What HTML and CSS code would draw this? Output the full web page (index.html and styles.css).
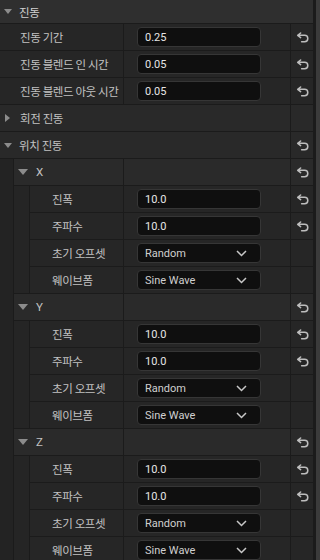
FILE: index.html
```html
<!doctype html>
<html>
<head>
<meta charset="utf-8">
<title>진동</title>
<link rel="stylesheet" href="styles.css">
</head>
<body>

<div class="panel">
<div class="list">

	<div class="header"><span class="tri down"></span>진동</div>

	<div class="row">
		<div class="name pad">진동 기간</div>
		<div class="value"><div class="field">0.25</div></div>
		<div class="reset"><svg width="13" height="11" viewBox="0 0 13 11"><path d="M4.6 1 L1.7 3.3 L4.6 5.6 M2 3.3 H8.6 A3.2 3.2 0 0 1 8.6 9.7 H5.6"/></svg></div>
	</div>
	<div class="row">
		<div class="name pad">진동 블렌드 인 시간</div>
		<div class="value"><div class="field">0.05</div></div>
		<div class="reset"><svg width="13" height="11" viewBox="0 0 13 11"><path d="M4.6 1 L1.7 3.3 L4.6 5.6 M2 3.3 H8.6 A3.2 3.2 0 0 1 8.6 9.7 H5.6"/></svg></div>
	</div>
	<div class="row">
		<div class="name pad">진동 블렌드 아웃 시간</div>
		<div class="value"><div class="field">0.05</div></div>
		<div class="reset"><svg width="13" height="11" viewBox="0 0 13 11"><path d="M4.6 1 L1.7 3.3 L4.6 5.6 M2 3.3 H8.6 A3.2 3.2 0 0 1 8.6 9.7 H5.6"/></svg></div>
	</div>

	<div class="row group">
		<div class="name"><span class="tri right"></span>회전 진동</div>
		<div class="reset"></div>
	</div>
	<div class="row group">
		<div class="name"><span class="tri down"></span>위치 진동</div>
		<div class="reset"><svg width="13" height="11" viewBox="0 0 13 11"><path d="M4.6 1 L1.7 3.3 L4.6 5.6 M2 3.3 H8.6 A3.2 3.2 0 0 1 8.6 9.7 H5.6"/></svg></div>
	</div>

	<div class="nest">
		<div class="gutter"></div>
		<div class="list">

			<!-- X -->
			<div class="row struct">
				<div class="name"><span class="tri down"></span>X</div>
				<div class="value"></div>
				<div class="reset"><svg width="13" height="11" viewBox="0 0 13 11"><path d="M4.6 1 L1.7 3.3 L4.6 5.6 M2 3.3 H8.6 A3.2 3.2 0 0 1 8.6 9.7 H5.6"/></svg></div>
			</div>
			<div class="nest">
				<div class="gutter wide"></div>
				<div class="list">
					<div class="row">
						<div class="name pad">진폭</div>
						<div class="value"><div class="field">10.0</div></div>
						<div class="reset"><svg width="13" height="11" viewBox="0 0 13 11"><path d="M4.6 1 L1.7 3.3 L4.6 5.6 M2 3.3 H8.6 A3.2 3.2 0 0 1 8.6 9.7 H5.6"/></svg></div>
					</div>
					<div class="row">
						<div class="name pad">주파수</div>
						<div class="value"><div class="field">10.0</div></div>
						<div class="reset"><svg width="13" height="11" viewBox="0 0 13 11"><path d="M4.6 1 L1.7 3.3 L4.6 5.6 M2 3.3 H8.6 A3.2 3.2 0 0 1 8.6 9.7 H5.6"/></svg></div>
					</div>
					<div class="row">
						<div class="name pad">초기 오프셋</div>
						<div class="value"><div class="field select">Random<svg width="11" height="7" viewBox="0 0 11 7"><path d="M1 1 L5.5 5.5 L10 1"/></svg></div></div>
						<div class="reset"></div>
					</div>
					<div class="row">
						<div class="name pad">웨이브폼</div>
						<div class="value"><div class="field select">Sine Wave<svg width="11" height="7" viewBox="0 0 11 7"><path d="M1 1 L5.5 5.5 L10 1"/></svg></div></div>
						<div class="reset"></div>
					</div>
				</div>
			</div>

			<!-- Y -->
			<div class="row struct">
				<div class="name"><span class="tri down"></span>Y</div>
				<div class="value"></div>
				<div class="reset"><svg width="13" height="11" viewBox="0 0 13 11"><path d="M4.6 1 L1.7 3.3 L4.6 5.6 M2 3.3 H8.6 A3.2 3.2 0 0 1 8.6 9.7 H5.6"/></svg></div>
			</div>
			<div class="nest">
				<div class="gutter wide"></div>
				<div class="list">
					<div class="row">
						<div class="name pad">진폭</div>
						<div class="value"><div class="field">10.0</div></div>
						<div class="reset"><svg width="13" height="11" viewBox="0 0 13 11"><path d="M4.6 1 L1.7 3.3 L4.6 5.6 M2 3.3 H8.6 A3.2 3.2 0 0 1 8.6 9.7 H5.6"/></svg></div>
					</div>
					<div class="row">
						<div class="name pad">주파수</div>
						<div class="value"><div class="field">10.0</div></div>
						<div class="reset"><svg width="13" height="11" viewBox="0 0 13 11"><path d="M4.6 1 L1.7 3.3 L4.6 5.6 M2 3.3 H8.6 A3.2 3.2 0 0 1 8.6 9.7 H5.6"/></svg></div>
					</div>
					<div class="row">
						<div class="name pad">초기 오프셋</div>
						<div class="value"><div class="field select">Random<svg width="11" height="7" viewBox="0 0 11 7"><path d="M1 1 L5.5 5.5 L10 1"/></svg></div></div>
						<div class="reset"></div>
					</div>
					<div class="row">
						<div class="name pad">웨이브폼</div>
						<div class="value"><div class="field select">Sine Wave<svg width="11" height="7" viewBox="0 0 11 7"><path d="M1 1 L5.5 5.5 L10 1"/></svg></div></div>
						<div class="reset"></div>
					</div>
				</div>
			</div>

			<!-- Z -->
			<div class="row struct">
				<div class="name"><span class="tri down"></span>Z</div>
				<div class="value"></div>
				<div class="reset"><svg width="13" height="11" viewBox="0 0 13 11"><path d="M4.6 1 L1.7 3.3 L4.6 5.6 M2 3.3 H8.6 A3.2 3.2 0 0 1 8.6 9.7 H5.6"/></svg></div>
			</div>
			<div class="nest">
				<div class="gutter wide"></div>
				<div class="list">
					<div class="row">
						<div class="name pad">진폭</div>
						<div class="value"><div class="field">10.0</div></div>
						<div class="reset"><svg width="13" height="11" viewBox="0 0 13 11"><path d="M4.6 1 L1.7 3.3 L4.6 5.6 M2 3.3 H8.6 A3.2 3.2 0 0 1 8.6 9.7 H5.6"/></svg></div>
					</div>
					<div class="row">
						<div class="name pad">주파수</div>
						<div class="value"><div class="field">10.0</div></div>
						<div class="reset"><svg width="13" height="11" viewBox="0 0 13 11"><path d="M4.6 1 L1.7 3.3 L4.6 5.6 M2 3.3 H8.6 A3.2 3.2 0 0 1 8.6 9.7 H5.6"/></svg></div>
					</div>
					<div class="row">
						<div class="name pad">초기 오프셋</div>
						<div class="value"><div class="field select">Random<svg width="11" height="7" viewBox="0 0 11 7"><path d="M1 1 L5.5 5.5 L10 1"/></svg></div></div>
						<div class="reset"></div>
					</div>
					<div class="row">
						<div class="name pad">웨이브폼</div>
						<div class="value"><div class="field select">Sine Wave<svg width="11" height="7" viewBox="0 0 11 7"><path d="M1 1 L5.5 5.5 L10 1"/></svg></div></div>
						<div class="reset"></div>
					</div>
				</div>
			</div>

		</div>
	</div>

</div>
<div class="scrollbar"></div>
</div>

</body>
</html>
```

FILE: styles.css
```css
html, body {
	margin: 0;
	height: 100%;
	overflow: hidden;
	background-color: #1b1b1b;
}

body {
	font-family: Roboto, "Noto Sans CJK KR", sans-serif;
	font-size: 11px;
	color: #c4c4c4;
}

.panel {
	display: flex;
	gap: 3px;
	height: 100%;
}

.list {
	display: flex;
	flex-direction: column;
	gap: 1px;
	flex: 1;
	min-width: 0;
	background-color: #1b1b1b;
}

.panel > .list {
	flex: none;
	width: 313px;
	align-self: flex-start;
}

.scrollbar {
	width: 4px;
	background-color: #3b3b3b;
}

/* Category header */
.header {
	display: flex;
	align-items: center;
	height: 23px;
	padding-left: 4px;
	background-color: #2f2f2f;
	color: #d2d2d2;
	font-size: 11.5px;
	letter-spacing: -0.4px;
}

.header .tri {
	margin-right: 7px;
}

/* Property rows */
.row {
	display: flex;
	gap: 1px;
	height: 26px;
}

.row > div {
	display: flex;
	align-items: center;
	background-color: #262626;
}

.name {
	flex: 1;
	min-width: 0;
	padding-left: 4px;
	white-space: nowrap;
	font-size: 11.5px;
	letter-spacing: -0.45px;
	color: #c2c2c2;
}

.name.pad {
	padding-left: 20px;
}

.nest .nest .name.pad {
	padding-left: 22px;
}

.group > div {
	background-color: #292929;
}

.struct > div {
	background-color: #2a2a2a;
}

.row .value {
	width: 153px;
	padding-left: 13px;
}

.row .reset {
	width: 22px;
	justify-content: center;
}

.reset svg {
	fill: none;
	stroke: #bdbdbd;
	stroke-width: 1.5;
	stroke-linecap: round;
	stroke-linejoin: round;
}

/* Triangles */
.tri {
	display: inline-block;
	width: 0;
	height: 0;
	margin-right: 7px;
}

.tri.down {
	border-left: 4.5px solid transparent;
	border-right: 4.5px solid transparent;
	border-top: 5px solid #8c8c8c;
}

.tri.right {
	margin-left: 1px;
	margin-right: 10px;
	border-top: 4.5px solid transparent;
	border-bottom: 4.5px solid transparent;
	border-left: 5.5px solid #8c8c8c;
}

.struct .tri.down {
	margin-right: 8px;
	border-left-width: 5px;
	border-right-width: 5px;
	border-top-width: 6px;
}

/* Value boxes */
.field {
	display: flex;
	align-items: center;
	box-sizing: border-box;
	width: 124px;
	height: 20px;
	padding: 0 13px 0 7px;
	background-color: #0f0f0f;
	border: 1px solid #363636;
	border-radius: 4px;
	color: #e6e6e6;
}

.field.select {
	justify-content: space-between;
	color: #d0d0d0;
}

.field svg {
	fill: none;
	stroke: #c8c8c8;
	stroke-width: 1.5;
}

/* Nesting */
.nest {
	display: flex;
}

.gutter {
	width: 13px;
	background-color: #232323;
	border-right: 1px solid #1b1b1b;
}

.gutter.wide {
	width: 15px;
	background-color: #252525;
}
```
